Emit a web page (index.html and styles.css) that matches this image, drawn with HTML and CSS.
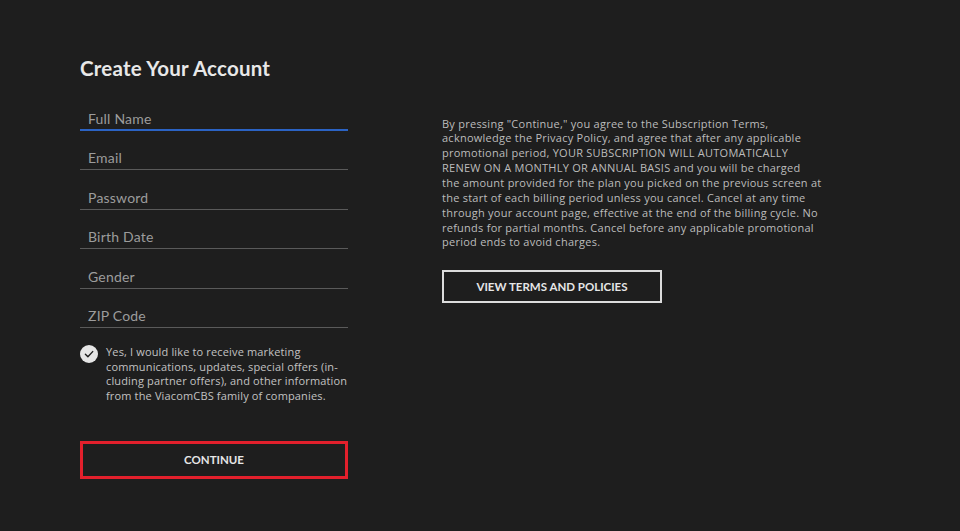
FILE: index.html
```html
<!DOCTYPE html>
<html lang="en">
<head>
<meta charset="utf-8">
<title>Create Your Account</title>
<link rel="stylesheet" href="styles.css">
</head>
<body>
<main class="page">
  <section class="form-col">
    <h1 class="title">Create Your Account</h1>
    <div class="fields">
      <div class="field field-active">Full Name</div>
      <div class="field">Email</div>
      <div class="field">Password</div>
      <div class="field">Birth Date</div>
      <div class="field">Gender</div>
      <div class="field">ZIP Code</div>
    </div>
    <div class="optin">
      <span class="check">
        <svg viewBox="0 0 18 18" width="18" height="18"><circle cx="9" cy="9" r="9" fill="#e6e6e6"/><path d="M5.4 9.3 L7.9 11.8 L12.7 6.6" fill="none" stroke="#1e1e1e" stroke-width="1.4" stroke-linecap="round" stroke-linejoin="round"/></svg>
      </span>
      <p class="optin-text">Yes, I would like to receive marketing communications, updates, special offers (in-cluding partner offers), and other information from the ViacomCBS family of companies.</p>
    </div>
    <button class="btn btn-continue">CONTINUE</button>
  </section>
  <section class="terms-col">
    <p class="terms">By pressing "Continue," you agree to the Subscription Terms,<br>
acknowledge the Privacy Policy, and agree that after any applicable<br>
promotional period, YOUR SUBSCRIPTION WILL AUTOMATICALLY<br>
RENEW ON A MONTHLY OR ANNUAL BASIS and you will be charged<br>
the amount provided for the plan you picked on the previous screen at<br>
the start of each billing period unless you cancel. Cancel at any time<br>
through your account page, effective at the end of the billing cycle. No<br>
refunds for partial months. Cancel before any applicable promotional<br>
period ends to avoid charges.</p>
    <button class="btn btn-terms">VIEW TERMS AND POLICIES</button>
  </section>
</main>
</body>
</html>
```
FILE: styles.css
```css
html, body {
  margin: 0;
  padding: 0;
  background: #1e1e1e;
  width: 960px;
  height: 531px;
  overflow: hidden;
  font-family: Lato, "Open Sans", sans-serif;
  color: #c4c4c4;
}

.page {
  display: flex;
  padding-left: 80px;
}

.form-col {
  width: 268px;
  padding-top: 56px;
  display: flex;
  flex-direction: column;
}

.title {
  margin: 0;
  font-size: 20.5px;
  line-height: 24px;
  font-weight: 700;
  color: #e8e8e8;
  letter-spacing: 0.2px;
}

.fields {
  margin-top: 11.6px;
  display: flex;
  flex-direction: column;
}

.field {
  height: 39.4px;
  box-sizing: border-box;
  border-bottom: 1.5px solid #5a5a5a;
  display: flex;
  align-items: flex-end;
  padding: 0 0 3px 8px;
  font-size: 14px;
  line-height: 16px;
  color: #9c9c9c;
  letter-spacing: 0.2px;
}

.field-active {
  border-bottom: 2.5px solid #2b63c4;
  padding-bottom: 2px;
}

.optin {
  display: flex;
  gap: 8px;
  margin-top: 17px;
  margin-right: -4px;
}

.check {
  flex: none;
  width: 18px;
  height: 18px;
}

.check svg {
  display: block;
}

.optin-text {
  margin: 0;
  font-family: "Open Sans", Lato, sans-serif;
  font-size: 11px;
  line-height: 14.7px;
  color: #c2c2c2;
  letter-spacing: 0.15px;
}

.btn {
  font-family: Lato, "Open Sans", sans-serif;
  font-weight: 700;
  font-size: 11.5px;
  background: transparent;
  color: #e6e6e6;
  box-sizing: border-box;
  cursor: pointer;
  padding: 0;
}

.btn-continue {
  margin-top: 37px;
  width: 268px;
  height: 38px;
  border: 3px solid #e3202c;
}

.terms-col {
  margin-left: 94px;
  width: 400px;
  padding-top: 116.6px;
  display: flex;
  flex-direction: column;
  align-items: flex-start;
}

.terms {
  margin: 0;
  font-family: "Open Sans", Lato, sans-serif;
  font-size: 11px;
  line-height: 14.85px;
  color: #bcbcbc;
  letter-spacing: 0.25px;
}

.btn-terms {
  margin-top: 20px;
  width: 220px;
  height: 33px;
  border: 2px solid #dcdcdc;
}
```
